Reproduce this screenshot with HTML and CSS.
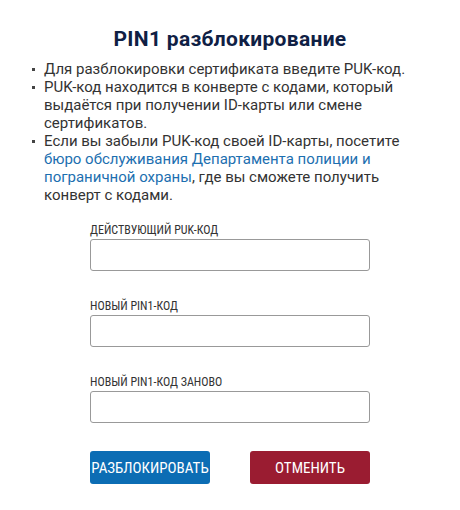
FILE: index.html
```html
<!DOCTYPE html>
<html>
<head>
    <title>PIN1 разблокирование</title>
    <link rel="stylesheet" href="styles.css">
</head>
<body>
    <div class="dialog">
        <h1 class="title">PIN1 разблокирование</h1>
        <ul class="info">
            <li>Для разблокировки сертификата введите PUK-код.</li>
            <li>PUK-код находится в конверте с кодами, который выдаётся при получении ID-карты или смене сертификатов.</li>
            <li>Если вы забыли PUK-код своей ID-карты, посетите <a href="#">бюро обслуживания Департамента полиции и пограничной охраны</a>, где вы сможете получить конверт с кодами.</li>
        </ul>
        <form class="form">
            <label class="field">
                <span class="label">Действующий PUK-код</span>
                <input type="password" class="input">
            </label>
            <label class="field">
                <span class="label">Новый PIN1-код</span>
                <input type="password" class="input">
            </label>
            <label class="field">
                <span class="label">Новый PIN1-код заново</span>
                <input type="password" class="input">
            </label>
            <div class="actions">
                <button type="button" class="btn btn-primary">Разблокировать</button>
                <button type="button" class="btn btn-cancel">Отменить</button>
            </div>
        </form>
    </div>
</body>
</html>
```
FILE: styles.css
```css
body {
    margin: 0;
    background: #fff;
    font-family: Roboto, "Liberation Sans", sans-serif;
    color: #333;
}
.dialog {
    width: 460px;
    height: 510px;
    padding-top: 26px;
    box-sizing: border-box;
}
.title {
    margin: 0;
    text-align: center;
    font-size: 21px;
    line-height: 26px;
    font-weight: 700;
    color: #0f2044;
    letter-spacing: 0.3px;
}
.info {
    list-style: none;
    margin: 8px 0 0;
    padding: 0 40px 0 44px;
    font-size: 15px;
    line-height: 18px;
}
.info li {
    position: relative;
}
.info li::before {
    content: "";
    position: absolute;
    left: -12px;
    top: 8px;
    width: 3px;
    height: 3px;
    background: #444;
}
.info a {
    color: #1c6fb0;
    text-decoration: none;
}
.form {
    width: 280px;
    margin: 19px 0 0 90px;
    display: flex;
    flex-direction: column;
    gap: 28px;
}
.field {
    display: flex;
    flex-direction: column;
    gap: 2px;
}
.label {
    font-family: "Roboto Condensed", Roboto, sans-serif;
    font-size: 12px;
    line-height: 14px;
    text-transform: uppercase;
    color: #333;
}
.input {
    height: 32px;
    box-sizing: border-box;
    border: 1px solid #999;
    border-radius: 3px;
    margin: 0;
    padding: 0 8px;
}
.actions {
    display: flex;
    justify-content: space-between;
}
.btn {
    width: 120px;
    height: 33px;
    border: none;
    border-radius: 3px;
    color: #fff;
    font-family: "Roboto Condensed", Roboto, sans-serif;
    font-size: 15px;
    text-transform: uppercase;
    padding: 0;
}
.btn-primary {
    background: #0c6db4;
}
.btn-cancel {
    background: #9a1c31;
}
```
